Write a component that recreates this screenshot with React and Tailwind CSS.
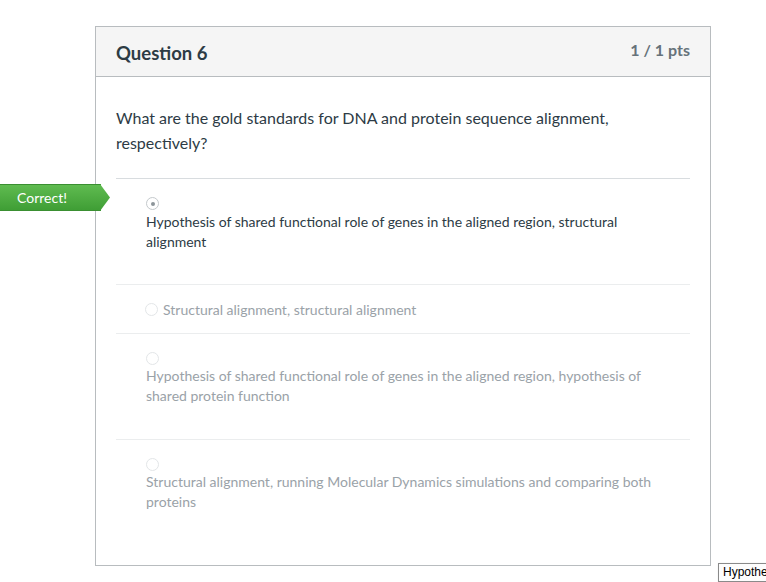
const answers = [
    {
        text: "Hypothesis of shared functional role of genes in the aligned region, structural alignment",
        selected: true,
        inline: false,
    },
    { text: "Structural alignment, structural alignment", selected: false, inline: true },
    {
        text: "Hypothesis of shared functional role of genes in the aligned region, hypothesis of shared protein function",
        selected: false,
        inline: false,
    },
    {
        text: "Structural alignment, running Molecular Dynamics simulations and comparing both proteins",
        selected: false,
        inline: false,
    },
];

const Radio = ({ checked }) => (
    <span
        className={`inline-flex items-center justify-center w-[13px] h-[13px] rounded-full border ${
            checked ? "border-[#c4c9cc]" : "border-[#e3e6e8]"
        } bg-white`}
    >
        {checked && <span className="w-[4px] h-[4px] rounded-full bg-[#8d959a]" />}
    </span>
);

const Answer = ({ answer, first }) => {
    const color = answer.selected ? "text-[#2d3b45]" : "text-[#9aa2a8]";
    if (answer.inline) {
        return (
            <div className="border-t border-[#ebedee] h-[49px] flex items-center gap-[5px] pl-[29px] pt-[1px]">
                <Radio checked={answer.selected} />
                <span className={`text-[14px] leading-[20px] ${color}`}>{answer.text}</span>
            </div>
        );
    }
    return (
        <div
            className={`relative ${
                first ? "border-t border-[#d8dcdf] pb-[32px]" : "border-t border-[#ebedee] pb-[33px]"
            } pt-[16px] pl-[30px] pr-[20px]`}
        >
            {answer.selected && (
                <div className="absolute left-[-116px] top-[5px] flex items-center h-[27px]">
                    <div className="h-[27px] w-[101px] bg-gradient-to-b from-[#5fbb50] to-[#3f9e35] border-y border-[#3a8f31] flex items-center pl-[17px] text-white text-[14px]">
                        Correct!
                    </div>
                    <svg width="10" height="27" viewBox="0 0 10 27" className="-ml-px">
                        <defs>
                            <linearGradient id="g" x1="0" y1="0" x2="0" y2="1">
                                <stop offset="0" stopColor="#5fbb50" />
                                <stop offset="1" stopColor="#3f9e35" />
                            </linearGradient>
                        </defs>
                        <polygon points="0,0 10,13.5 0,27" fill="url(#g)" />
                    </svg>
                </div>
            )}
            <div className={`${first ? "h-[17px]" : "h-[16px]"} flex items-center`}>
                <Radio checked={answer.selected} />
            </div>
            <p className={`text-[14px] leading-[20px] ${color}`}>{answer.text}</p>
        </div>
    );
};

export default function App() {
    return (
        <div
            className="relative w-[766px] h-[582px] overflow-hidden bg-white"
            style={{ fontFamily: "Lato, 'Open Sans', sans-serif" }}
        >
            <div className="ml-[95px] mt-[26px] w-[616px] h-[540px] border border-[#b8bcbf]">
                <div className="h-[50px] bg-[#f5f5f5] border-b border-[#b8bcbf] flex items-start justify-between px-[20px]">
                    <h2 className="text-[18.5px] font-bold text-[#2d3b45] mt-[13px]">Question 6</h2>
                    <span className="text-[16px] font-bold text-[#66727a] mt-[11px]">1 / 1 pts</span>
                </div>
                <div className="px-[20px] pt-[28px]">
                    <p className="text-[16px] leading-[25px] text-[#2d3b45] pr-[60px] mb-[23px]">
                        What are the gold standards for DNA and protein sequence alignment, respectively?
                    </p>
                    {answers.map((a, i) => (
                        <Answer key={i} answer={a} first={i === 0} />
                    ))}
                </div>
            </div>
            <div
                className="absolute left-[718px] top-[563px] bg-[#fdfdfd] border border-[#8a8a8a] px-[4px] text-[12px] leading-[17px] text-black whitespace-nowrap shadow-[1px_1px_2px_rgba(0,0,0,0.3)]"
                style={{ fontFamily: "'Liberation Sans', sans-serif" }}
            >
                Hypothesis of shared functional role
            </div>
        </div>
    );
}
